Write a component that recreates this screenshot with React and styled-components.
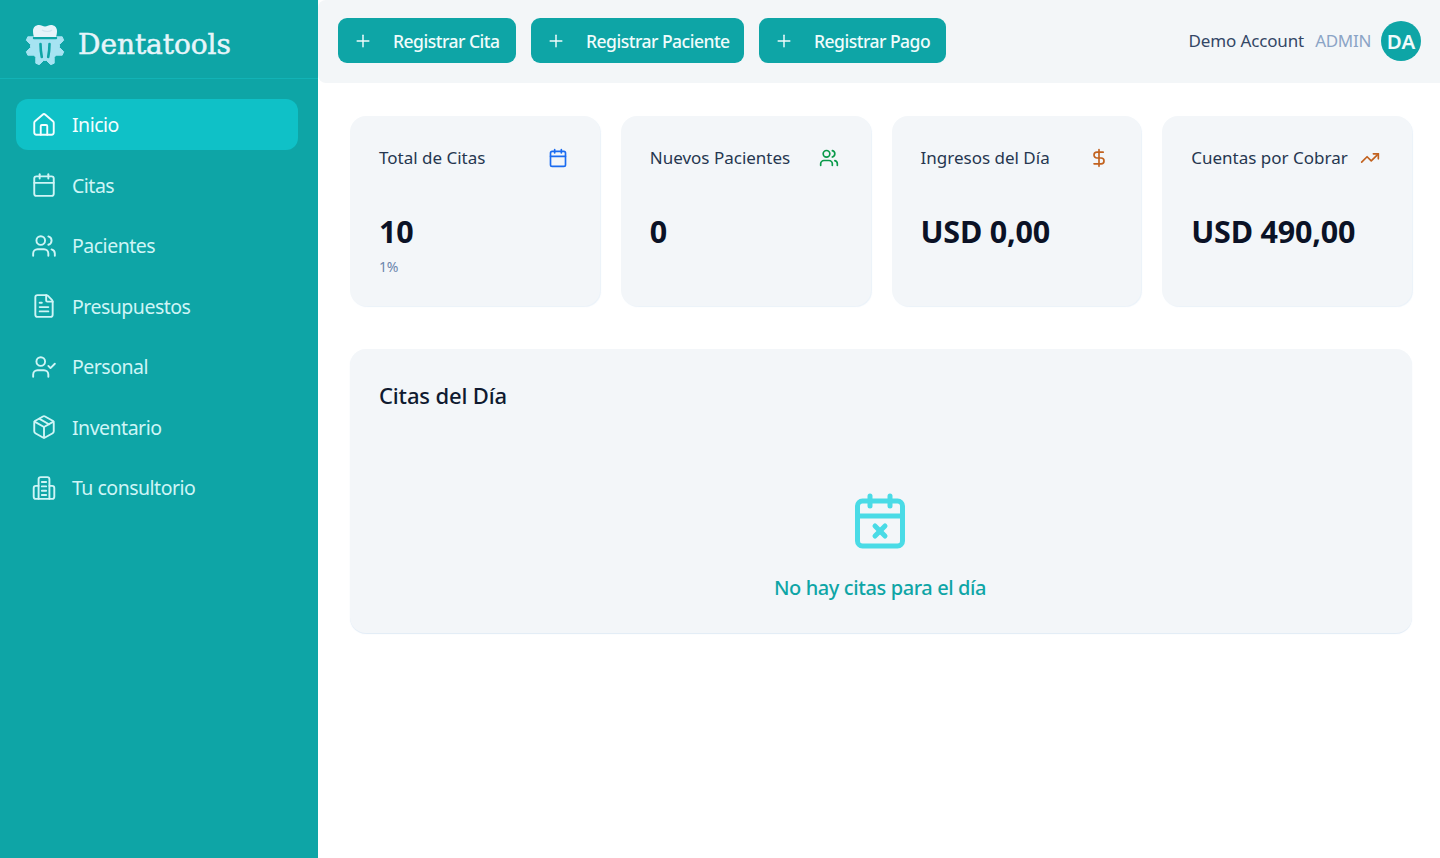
import React from 'react'
import styled, { createGlobalStyle } from 'styled-components'
import {
  Home, Calendar, Users, FileText, UserCheck, Package,
  Plus, DollarSign, TrendingUp, CalendarX,
} from 'lucide-react'

const GlobalStyle = createGlobalStyle`
  html, body { margin: 0; padding: 0; background: #fff; }
  body { font-family: "Noto Sans", "Open Sans", sans-serif; }
`

const Shell = styled.div`
  display: flex;
  width: 1440px;
  height: 858px;
  overflow: hidden;
`

const Sidebar = styled.aside`
  width: 318px;
  flex: none;
  background: #0ea5a6;
`

const Brand = styled.div`
  height: 79px;
  box-sizing: border-box;
  display: flex;
  align-items: center;
  gap: 13px;
  padding: 11px 0 0 25px;
  border-bottom: 1px solid #12b3b6;
`

const BrandName = styled.span`
  font-family: "DejaVu Serif", serif;
  font-size: 28px;
  letter-spacing: -0.05px;
  -webkit-text-stroke: 0.5px #e6f5fa;
  color: #e6f5fa;
`

const Nav = styled.nav`
  display: flex;
  flex-direction: column;
  gap: 9.5px;
  padding: 20px 20px 0 16px;
`

const NavItem = styled.a`
  height: 51px;
  display: flex;
  align-items: center;
  gap: 15px;
  padding-left: 15px;
  border-radius: 12px;
  font-size: 19.5px;
  letter-spacing: -0.5px;
  color: ${p => (p.$active ? '#f4feff' : '#cff5f6')};
  background: ${p => (p.$active ? '#0fc1c7' : 'transparent')};
`

const Main = styled.main`
  flex: 1;
  min-width: 0;
`

const Header = styled.header`
  height: 83px;
  box-sizing: border-box;
  display: flex;
  align-items: center;
  justify-content: space-between;
  padding: 0 19px 2px 20px;
  background: #f3f6f8;
  border-top-left-radius: 8px;
  border-bottom-left-radius: 8px;
`

const Actions = styled.div`
  display: flex;
  gap: 15px;
`

const ActionButton = styled.button`
  width: ${p => p.$w}px;
  height: 45px;
  display: flex;
  align-items: center;
  gap: 20px;
  padding: 0 0 0 15px;
  border: 0;
  border-radius: 9px;
  background: #0ea5a6;
  color: #f0fcfc;
  font: 500 17.5px "Noto Sans", sans-serif;
  letter-spacing: -0.5px;
  white-space: nowrap;
`

const Account = styled.div`
  display: flex;
  align-items: center;
`

const AccountName = styled.span`
  font-size: 17px;
  letter-spacing: -0.13px;
  color: #334766;
`

const Role = styled.span`
  margin: 0 10px 0 11px;
  font-size: 17px;
  letter-spacing: -0.3px;
  color: #8ba4c6;
`

const Avatar = styled.div`
  width: 40px;
  height: 40px;
  display: flex;
  align-items: center;
  justify-content: center;
  border-radius: 50%;
  background: #0ea5a6;
  color: #f1fbfb;
  font-size: 20.5px;
  font-weight: 600;
`

const Content = styled.div`
  display: flex;
  flex-direction: column;
  gap: 43px;
  padding: 33px 28px 0 32px;
`

const Stats = styled.div`
  display: grid;
  grid-template-columns: repeat(4, 1fr);
  gap: 21px;
`

const StatCard = styled.section`
  height: 190px;
  box-sizing: border-box;
  padding: 29px 29px 0;
  border-radius: 16px;
  background: #f3f6f9;
  box-shadow: 1px 1px 1px rgba(205, 222, 240, 0.4);
`

const StatHead = styled.div`
  height: 26px;
  display: flex;
  align-items: center;
  justify-content: space-between;
  padding-right: 3px;
`

const StatTitle = styled.h3`
  margin: 0 0 2px;
  font-size: 17px;
  font-weight: 400;
  color: #263650;
`

const StatValue = styled.div`
  margin-top: 40px;
  font-size: 30.5px;
  line-height: 40px;
  font-weight: 700;
  letter-spacing: -0.2px;
  color: #0b1226;
`

const StatNote = styled.div`
  margin-top: 6px;
  font-size: 14px;
  letter-spacing: -0.3px;
  color: #6b86ad;
`

const DayCard = styled.section`
  height: 284px;
  box-sizing: border-box;
  padding: 30px 29px 0;
  border-radius: 16px;
  background: #f3f6f9;
  box-shadow: 0 1px 1px rgba(205, 222, 240, 0.6);
`

const DayTitle = styled.h2`
  margin: 0;
  font-size: 22px;
  line-height: 32px;
  font-weight: 500;
  letter-spacing: -0.15px;
  color: #0f1a30;
`

const Empty = styled.div`
  display: flex;
  flex-direction: column;
  align-items: center;
  margin-top: 80px;
  padding-right: 2px;
  gap: 23px;
  font-size: 20px;
  font-weight: 500;
  letter-spacing: -0.4px;
  color: #0ea5a6;
`

// 8 teeth gear, center 20,21
const gearPoints = Array.from({ length: 32 }, (_, i) => {
  const a = ((i - 0.5) * Math.PI) / 16 + Math.PI / 8
  const r = i % 4 < 2 ? 19.5 : 14.5
  return `${(20 + r * Math.cos(a)).toFixed(1)},${(21 + r * Math.sin(a)).toFixed(1)}`
}).join(' ')

const ToothGear = () => (
  <svg width="40" height="40" viewBox="0 0 40 40">
    <polygon points={gearPoints} fill="#a6e3f2" stroke="#a6e3f2" strokeWidth="1" strokeLinejoin="round" />
    <circle cx="20" cy="21" r="14" fill="#a6e3f2" />
    <g fill="none" stroke="#0ea5a6" strokeLinecap="round">
      <path d="M9 13 H31" strokeWidth="2.4" />
      <path d="M15.5 19 C15.5 24 16 28 16.8 32" strokeWidth="2.6" />
      <path d="M24.5 19 C24.5 24 24 28 23.2 32" strokeWidth="2.6" />
    </g>
    <path
      fill="#e6f3fa"
      d="M8 6 C8 2 11 0 14 0 C16.5 0 18 1.5 20 1.5 C22 1.5 23.5 0 26 0 C29 0 32 2 32 6 C32 8.5 31.5 10.5 31 12 H9 C8.5 10.5 8 8.5 8 6 Z"
    />
    <path d="M17 5 C20 7 25 7 27 5" fill="none" stroke="#cfe4ef" strokeWidth="1.2" />
  </svg>
)

// the building of "Tu consultorio": tall middle block with two side wings
const ClinicIcon = ({ size = 26, strokeWidth = 1.75 }) => (
  <svg
    width={size}
    height={size}
    viewBox="0 0 24 24"
    fill="none"
    stroke="currentColor"
    strokeWidth={strokeWidth}
    strokeLinecap="round"
    strokeLinejoin="round"
  >
    <path d="M7 22 V4 a2 2 0 0 1 2 -2 h6 a2 2 0 0 1 2 2 v18" />
    <path d="M7 10 H4.5 a2 2 0 0 0 -2 2 v8 a2 2 0 0 0 2 2 h15 a2 2 0 0 0 2 -2 v-8 a2 2 0 0 0 -2 -2 H17" />
    <path d="M10 6.5 h4 M10 10.5 h4 M10 14.5 h4 M10 18.5 h4" />
  </svg>
)

const navItems = [
  { label: 'Inicio', icon: Home, active: true },
  { label: 'Citas', icon: Calendar },
  { label: 'Pacientes', icon: Users },
  { label: 'Presupuestos', icon: FileText },
  { label: 'Personal', icon: UserCheck },
  { label: 'Inventario', icon: Package },
  { label: 'Tu consultorio', icon: ClinicIcon },
]

const buttons = [
  { label: 'Registrar Cita', w: 178 },
  { label: 'Registrar Paciente', w: 213 },
  { label: 'Registrar Pago', w: 187 },
]

const stats = [
  { title: 'Total de Citas', value: '10', note: '1%', icon: Calendar, color: '#1a6bf0' },
  { title: 'Nuevos Pacientes', value: '0', icon: Users, color: '#0a9a4a' },
  { title: 'Ingresos del Día', value: 'USD 0,00', icon: DollarSign, color: '#c2621f' },
  { title: 'Cuentas por Cobrar', value: 'USD 490,00', icon: TrendingUp, color: '#c2621f' },
]

export default function App() {
  return (
    <Shell>
      <GlobalStyle />
      <Sidebar>
        <Brand>
          <ToothGear />
          <BrandName>Dentatools</BrandName>
        </Brand>
        <Nav>
          {navItems.map(item => (
            <NavItem key={item.label} $active={item.active}>
              <item.icon size={26} strokeWidth={1.75} />
              {item.label}
            </NavItem>
          ))}
        </Nav>
      </Sidebar>
      <Main>
        <Header>
          <Actions>
            {buttons.map(b => (
              <ActionButton key={b.label} $w={b.w}>
                <Plus size={20} strokeWidth={1.75} />
                {b.label}
              </ActionButton>
            ))}
          </Actions>
          <Account>
            <AccountName>Demo Account</AccountName>
            <Role>ADMIN</Role>
            <Avatar>DA</Avatar>
          </Account>
        </Header>
        <Content>
          <Stats>
            {stats.map(s => (
              <StatCard key={s.title}>
                <StatHead>
                  <StatTitle>{s.title}</StatTitle>
                  <s.icon size={20} strokeWidth={2} color={s.color} />
                </StatHead>
                <StatValue>{s.value}</StatValue>
                {s.note && <StatNote>{s.note}</StatNote>}
              </StatCard>
            ))}
          </Stats>
          <DayCard>
            <DayTitle>Citas del Día</DayTitle>
            <Empty>
              <CalendarX size={60} strokeWidth={2} color="#4adbe6" />
              No hay citas para el día
            </Empty>
          </DayCard>
        </Content>
      </Main>
    </Shell>
  )
}
